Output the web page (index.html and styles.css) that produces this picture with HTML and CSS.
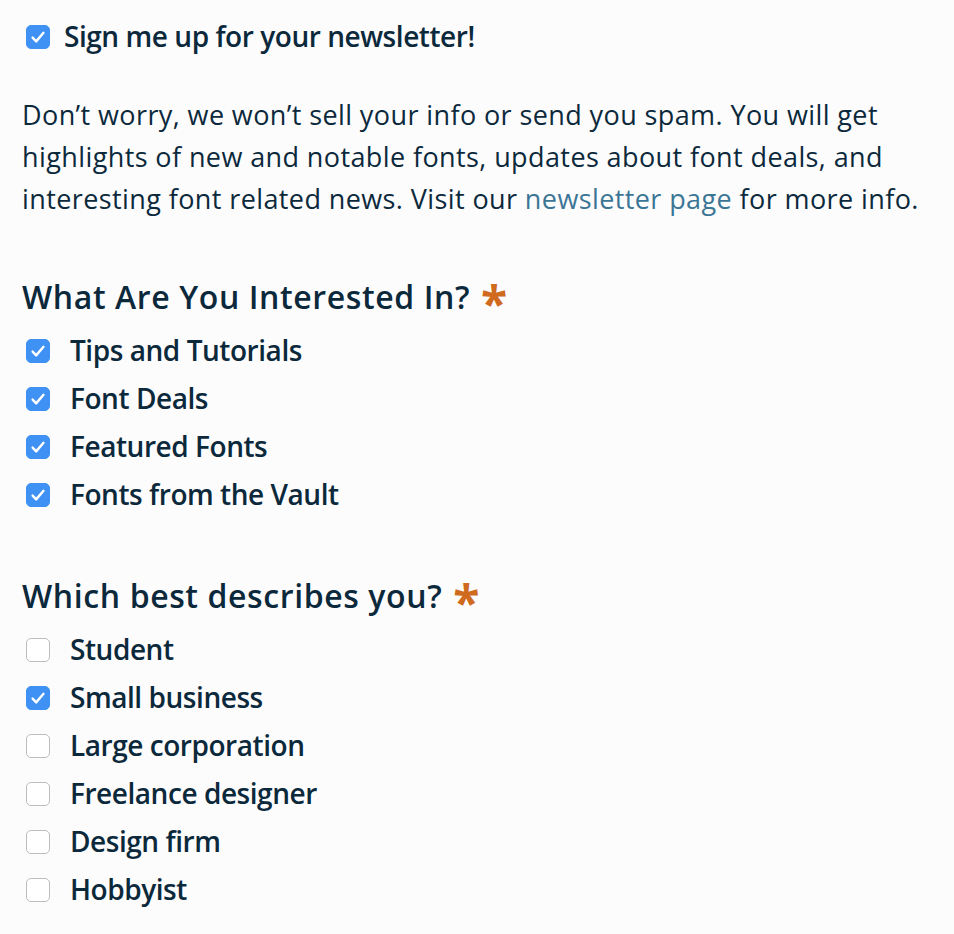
FILE: index.html
```html
<!DOCTYPE html>
<html lang="en">
<head>
<meta charset="utf-8">
<title>Newsletter</title>
<link rel="stylesheet" href="styles.css">
</head>
<body>
<form class="form">
  <label class="check check-main">
    <span class="box on"><svg viewBox="0 0 24 24" width="24" height="24"><path d="M6.6 12.6l3.6 3.8 7.3-8.6" fill="none" stroke="#fff" stroke-width="2.4" stroke-linecap="round" stroke-linejoin="round"/></svg></span>
    <span class="label">Sign me up for your newsletter!</span>
  </label>

  <p class="intro">Don’t worry, we won’t sell your info or send you spam. You will get highlights of new and notable fonts, updates about font deals, and interesting font related news. Visit our <a href="#" class="link">newsletter page</a> for more info.</p>

  <h2 class="heading">What Are You Interested In? <span class="req">*</span></h2>
  <div class="list">
    <label class="check"><span class="box on"><svg viewBox="0 0 24 24" width="24" height="24"><path d="M6.6 12.6l3.6 3.8 7.3-8.6" fill="none" stroke="#fff" stroke-width="2.4" stroke-linecap="round" stroke-linejoin="round"/></svg></span><span class="label">Tips and Tutorials</span></label>
    <label class="check"><span class="box on"><svg viewBox="0 0 24 24" width="24" height="24"><path d="M6.6 12.6l3.6 3.8 7.3-8.6" fill="none" stroke="#fff" stroke-width="2.4" stroke-linecap="round" stroke-linejoin="round"/></svg></span><span class="label">Font Deals</span></label>
    <label class="check"><span class="box on"><svg viewBox="0 0 24 24" width="24" height="24"><path d="M6.6 12.6l3.6 3.8 7.3-8.6" fill="none" stroke="#fff" stroke-width="2.4" stroke-linecap="round" stroke-linejoin="round"/></svg></span><span class="label">Featured Fonts</span></label>
    <label class="check"><span class="box on"><svg viewBox="0 0 24 24" width="24" height="24"><path d="M6.6 12.6l3.6 3.8 7.3-8.6" fill="none" stroke="#fff" stroke-width="2.4" stroke-linecap="round" stroke-linejoin="round"/></svg></span><span class="label">Fonts from the Vault</span></label>
  </div>

  <h2 class="heading">Which best describes you? <span class="req">*</span></h2>
  <div class="list">
    <label class="check"><span class="box"></span><span class="label">Student</span></label>
    <label class="check"><span class="box on"><svg viewBox="0 0 24 24" width="24" height="24"><path d="M6.6 12.6l3.6 3.8 7.3-8.6" fill="none" stroke="#fff" stroke-width="2.4" stroke-linecap="round" stroke-linejoin="round"/></svg></span><span class="label">Small business</span></label>
    <label class="check"><span class="box"></span><span class="label">Large corporation</span></label>
    <label class="check"><span class="box"></span><span class="label">Freelance designer</span></label>
    <label class="check"><span class="box"></span><span class="label">Design firm</span></label>
    <label class="check"><span class="box"></span><span class="label">Hobbyist</span></label>
  </div>
</form>
</body>
</html>
```
FILE: styles.css
```css
html, body {
  margin: 0;
  background: #fcfcfc;
}
body {
  font-family: "Open Sans", "Liberation Sans", sans-serif;
  color: #0c293c;
}
.form {
  padding: 13px 22px 0 22px;
  display: flex;
  flex-direction: column;
  align-items: flex-start;
}
.check {
  display: flex;
  align-items: center;
  height: 48px;
  gap: 20px;
  padding-left: 4px;
}
.check-main {
  gap: 14px;
}
.box {
  width: 24px;
  height: 24px;
  box-sizing: border-box;
  border: 1px solid #bdbdbd;
  border-radius: 5px;
  background: #fff;
  display: flex;
  flex: none;
}
.box.on {
  background: #3f92f4;
  border-color: #3f92f4;
}
.box svg {
  margin: -1px;
}
.label {
  font-size: 28px;
  line-height: 44px;
  font-weight: 600;
  letter-spacing: -0.45px;
  margin-top: -3px;
}
.intro {
  margin: 33px 0 0 0;
  font-size: 27px;
  line-height: 42px;
  letter-spacing: 0.4px;
}
.link {
  color: #3c7696;
  text-decoration: none;
}
.heading {
  margin: 53px 0 6px 0;
  font-size: 32px;
  line-height: 48px;
  font-weight: 600;
  letter-spacing: 0.6px;
}
.req {
  color: #cf6a1f;
  font-size: 48px;
  font-weight: 700;
  line-height: 0;
  vertical-align: -12px;
  margin-left: 2px;
}
.list {
  display: flex;
  flex-direction: column;
}
```
